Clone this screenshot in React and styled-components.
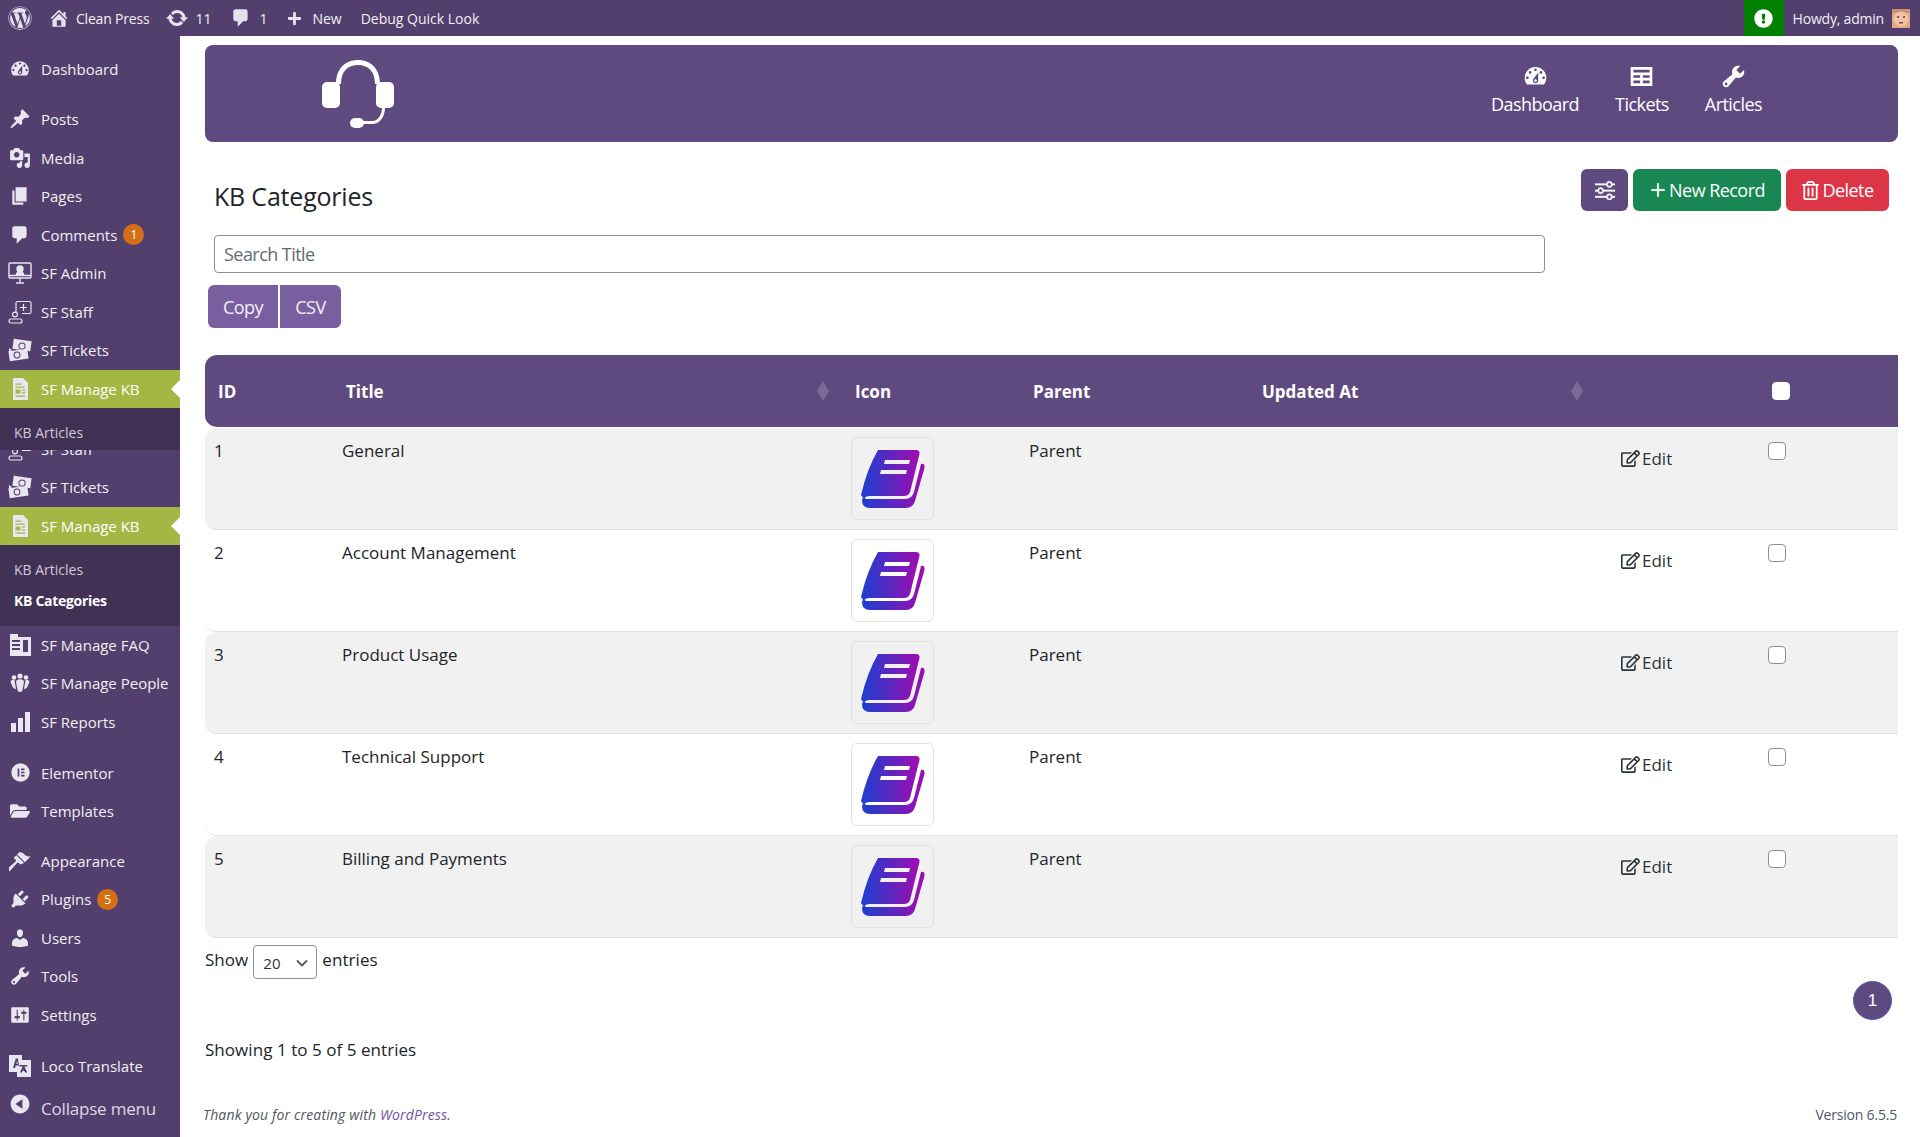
import React from "react";
import styled, { createGlobalStyle } from "styled-components";
import { FaWordpress, FaFolderOpen, FaExclamationCircle, FaPlus, FaRegEdit, FaRegTrashAlt } from "react-icons/fa";
import { BsSliders, BsPlusLg } from "react-icons/bs";

const FONT = `"Open Sans", "Noto Sans", "Liberation Sans", sans-serif`;

const Global = createGlobalStyle`
  html, body { margin: 0; padding: 0; height: 1137px; overflow: hidden; background: #fff; }
  body { font-family: ${FONT}; color: #212529; }
  * { box-sizing: border-box; }
`;

const P = {
  dashboard: "M3.76 16h12.48c1.1-1.37 1.76-3.11 1.76-5 0-4.42-3.58-8-8-8s-8 3.58-8 8c0 1.89.66 3.63 1.76 5zM10 4c.55 0 1 .45 1 1s-.45 1-1 1-1-.45-1-1 .45-1 1-1zM6 6c.55 0 1 .45 1 1s-.45 1-1 1-1-.45-1-1 .45-1 1-1zm8 0c.55 0 1 .45 1 1s-.45 1-1 1-1-.45-1-1 .45-1 1-1zm-5.37 5.55L12 7v6c0 1.1-.9 2-2 2s-2-.9-2-2c0-.57.24-1.08.63-1.45zM4 10c.55 0 1 .45 1 1s-.45 1-1 1-1-.45-1-1 .45-1 1-1zm12 0c.55 0 1 .45 1 1s-.45 1-1 1-1-.45-1-1 .45-1 1-1zm-5 3c0-.55-.45-1-1-1s-1 .45-1 1 .45 1 1 1 1-.45 1-1z",
  post: "M10.44 3.02l1.82-1.82 6.36 6.35-1.83 1.82c-1.05-.68-2.48-.57-3.41.36l-.75.75c-.92.93-1.04 2.35-.35 3.41l-1.83 1.82-2.41-2.41-2.8 2.79c-.42.42-3.38 2.71-3.8 2.29s1.86-3.39 2.28-3.81l2.79-2.79L4.1 9.36l1.83-1.82c1.05.69 2.48.57 3.4-.36l.75-.75c.93-.92 1.05-2.35.36-3.41z",
  media: "M13 11V4c0-.55-.45-1-1-1h-1.67L9 1H5L3.67 3H2c-.55 0-1 .45-1 1v7c0 .55.45 1 1 1h10c.55 0 1-.45 1-1zM7 4.5c1.38 0 2.5 1.12 2.5 2.5S8.38 9.5 7 9.5 4.5 8.38 4.5 7 5.62 4.5 7 4.5zM14 6h5v10.5c0 1.38-1.12 2.5-2.5 2.5S14 17.88 14 16.5s1.12-2.5 2.5-2.5c.17 0 .34.02.5.05V9h-3V6zm-4 8.05V13h2v3.5c0 1.38-1.12 2.5-2.5 2.5S7 17.88 7 16.5 8.12 14 9.5 14c.17 0 .34.02.5.05z",
  page: "M6 15V2h10v13H6zm-1 1h8v2H3V5h2v11z",
  comment: "M5 2h9c1.1 0 2 .9 2 2v7c0 1.1-.9 2-2 2h-2l-5 5v-5H5c-1.1 0-2-.9-2-2V4c0-1.1.9-2 2-2z",
  home: "M16 8.5l1.53 1.53-1.06 1.06L10 4.62l-6.47 6.47-1.06-1.06L10 2.5l4 4v-2h2v4zm-6-2.46l6 5.99V18H4v-5.97zM12 17v-5H8v5h4z",
  update: "M10.2 3.28c3.53 0 6.43 2.61 6.92 6h2.08l-3.5 4-3.5-4h2.32c-.45-1.97-2.21-3.45-4.32-3.45-1.45 0-2.73.71-3.54 1.78L4.95 5.66C6.23 4.2 8.11 3.28 10.2 3.28zm-.4 13.44c-3.52 0-6.43-2.61-6.92-6H.8l3.5-4c1.17 1.33 2.33 2.67 3.5 4H5.48c.45 1.97 2.21 3.45 4.32 3.45 1.45 0 2.73-.71 3.54-1.78l1.71 1.95c-1.28 1.46-3.15 2.38-5.25 2.38z",
  plugins: "M13.11 4.36L9.87 7.6 8 5.73l3.24-3.24c.35-.34 1.05-.2 1.56.32.52.51.66 1.21.31 1.55zm-8 1.77l.91-1.12 9.01 9.01-1.19.84c-.71.71-2.63 1.16-3.82 1.16H6.14L4.9 17.26c-.59.59-1.54.59-2.12 0-.59-.58-.59-1.53 0-2.12l1.24-1.24v-3.88c0-1.13.4-3.19 1.09-3.89zm7.26 3.97l3.24-3.24c.34-.35 1.04-.21 1.55.31.52.51.66 1.21.31 1.55l-3.24 3.25z",
  users: "M10 9.25c-2.27 0-2.73-3.44-2.73-3.44C7 4.02 7.82 2 9.97 2c2.16 0 2.98 2.02 2.71 3.81 0 0-.41 3.44-2.68 3.44zm0 2.57L12.72 10c2.39 0 4.52 2.33 4.52 4.53v2.49s-3.65 1.13-7.24 1.13c-3.65 0-7.24-1.13-7.24-1.13v-2.49c0-2.25 1.94-4.48 4.47-4.48z",
  tools: "M16.68 9.77c-1.34 1.34-3.3 1.67-4.95.99l-5.41 6.52c-.99.99-2.59.99-3.58 0s-.99-2.59 0-3.57l6.52-5.42c-.68-1.65-.35-3.61.99-4.95 1.28-1.28 3.12-1.62 4.72-1.06l-2.89 2.89 2.82 2.82 2.86-2.87c.53 1.58.18 3.39-1.08 4.65zM3.81 16.21c.4.39 1.04.39 1.43 0 .4-.4.4-1.04 0-1.43-.39-.4-1.03-.4-1.43 0-.39.39-.39 1.03 0 1.43z",
  settings: "M18 16V4c0-.55-.45-1-1-1H3c-.55 0-1 .45-1 1v12c0 .55.45 1 1 1h14c.55 0 1-.45 1-1zM8 11h1c.55 0 1 .45 1 1s-.45 1-1 1H8v1.5c0 .28-.22.5-.5.5s-.5-.22-.5-.5V13H6c-.55 0-1-.45-1-1s.45-1 1-1h1V5.5c0-.28.22-.5.5-.5s.5.22.5.5V11zm5-2h-1c-.55 0-1-.45-1-1s.45-1 1-1h1V5.5c0-.28.22-.5.5-.5s.5.22.5.5V7h1c.55 0 1 .45 1 1s-.45 1-1 1h-1v5.5c0 .28-.22.5-.5.5s-.5-.22-.5-.5V9z",
  collapse: "M10 2.16c4.33 0 7.84 3.51 7.84 7.84s-3.51 7.84-7.84 7.84S2.16 14.33 2.16 10 5.71 2.16 10 2.16zm2 11.72V6.12L6.18 9.97z",
  appearance: "M14.48 11.06L7.41 3.99l1.5-1.5c.5-.56 2.3-.47 3.51.32 1.21.8 1.43 1.28 2.91 2.1 1.18.64 2.45 1.26 4.45.85zm-.71.71L6.7 4.7 4.93 6.47c-.39.39-.39 1.02 0 1.41l1.06 1.06c.39.39.39 1.03 0 1.42-.6.6-6.4 5.67-7.03 6.3-.59.59-.59 1.54 0 2.12.59.59 1.53.59 2.12 0 .63-.63 5.7-6.43 6.3-7.03.39-.39 1.03-.39 1.42 0l1.06 1.06c.39.39 1.02.39 1.41 0z",
  elementor: "M10 2a8 8 0 1 0 0 16 8 8 0 0 0 0-16zM7.5 6.5H9v7H7.5zM10.5 6.5h3V8h-3zM10.5 9.25h3v1.5h-3zM10.5 12h3v1.5h-3z",
  table: "M18 17V3H2v14h16zM16 7H4V5h12v2zm-7 4H4V9h5v2zm7 0h-5V9h5v2zm-7 4H4v-2h5v2zm7 0h-5v-2h5v2z",
};

const Dash = ({ d, size = 20 }) => (
  <svg width={size} height={size} viewBox="0 0 20 20" fill="currentColor" fillRule="evenodd"><path d={d} /></svg>
);

const AdminIcon = () => (
  <svg width="24" height="24" viewBox="0 0 24 24" fill="none" stroke="currentColor" strokeWidth="1.4">
    <rect x="1" y="2" width="22" height="15" rx="1" />
    <path d="M8 22h8M12 17v5M1 14.5h22" />
    <circle cx="12" cy="8" r="3" fill="currentColor" />
    <path d="M8.5 14c0-2 1.5-3 3.5-3s3.5 1 3.5 3z" fill="currentColor" />
  </svg>
);
const StaffIcon = () => (
  <svg width="24" height="24" viewBox="0 0 24 24" fill="none" stroke="currentColor" strokeWidth="1.2">
    <path d="M8 12V3a1.5 1.5 0 0 1 1.5-1.5h12A1.5 1.5 0 0 1 23 3v9a1.5 1.5 0 0 1-1.5 1.5H14" />
    <path d="M15.5 4v7M12 7.5h7" />
    <circle cx="7" cy="14.5" r="2.4" />
    <rect x="1" y="19" width="13" height="4" rx="2" />
  </svg>
);
const TicketsIcon = () => (
  <svg width="24" height="24" viewBox="0 0 24 24" fill="currentColor">
    <rect x="5" y="2" width="18" height="10" transform="rotate(8 14 7)" />
    <rect x="1" y="12" width="19" height="10" transform="rotate(-8 10 17)" />
    <path d="M6 0l2 3-2 2zM1 10l3 2-3 2z" />
    <circle cx="14" cy="8" r="3.6" fill="#523f6d" />
    <circle cx="14" cy="8" r="2.6" />
    <circle cx="9" cy="17" r="3.4" fill="#523f6d" />
    <circle cx="9" cy="17" r="2.4" />
  </svg>
);
const KbIcon = () => (
  <svg width="24" height="24" viewBox="0 0 24 24" fill="currentColor" fillRule="evenodd">
    <path d="M5 1h10l5 5v17H5zM7.5 6.5v1.3h6V6.5zM7.5 9.5v1.3h9V9.5zM7.5 12.5v4h5v-4zM14 12.5v1.3h3v-1.3zM14 15.2v1.3h3v-1.3zM7.5 18.5v1.3h9.5v-1.3z" />
  </svg>
);
const FaqIcon = () => (
  <svg width="24" height="24" viewBox="0 0 24 24" fill="currentColor" fillRule="evenodd">
    <path d="M2 1h8v3h13v19H2zM4 7v2h8V7zM4 11v2h8v-2zM4 15v2h8v-2zM15 7v12h5V7z" />
  </svg>
);
const PeopleIcon = () => (
  <svg width="24" height="24" viewBox="0 0 24 24" fill="currentColor">
    <circle cx="12" cy="5" r="2.6" /><circle cx="6" cy="6.5" r="2.3" /><circle cx="18" cy="6.5" r="2.3" />
    <path d="M8 11c0-2 1.8-2.8 4-2.8S16 9 16 11l-1.5 8c-.3 1-1.2 2-2.5 2s-2.2-1-2.5-2z" />
    <path d="M2.5 11c0-1.5 1.5-2.5 4-2.2L7 12l1 6c-2 0-3-1-3.5-2.5zM21.5 11c0-1.5-1.5-2.5-4-2.2L17 12l-1 6c2 0 3-1 3.5-2.5z" />
  </svg>
);
const ReportsIcon = () => (
  <svg width="24" height="24" viewBox="0 0 24 24" fill="currentColor">
    <rect x="3" y="13" width="5" height="9" /><rect x="10" y="8" width="5" height="14" /><rect x="17" y="2" width="5" height="20" />
  </svg>
);
const LocoIcon = () => (
  <svg width="24" height="24" viewBox="0 0 24 24" fill="currentColor" fillRule="evenodd">
    <path d="M1 1h13v5h9v17H9v-5H1zM5 14h2l.8-2.5h2.6l.4 1.3V10L9.8 4.5h-2zM8.3 9.8h1.6L9.1 7zM11.5 11v1.4h3.2l-2.8 6h1.7l1.9-2.1 1.9 2.1h1.8l-2.8-6h2.8V11h-3.3z" />
  </svg>
);

const Root = styled.div`
  width: 1920px;
  height: 1137px;
  display: grid;
  grid-template-columns: 180px 1fr;
  grid-template-rows: 36px 1fr;
  overflow: hidden;
`;

const AdminBar = styled.header`
  grid-column: 1 / 3;
  background: #523f6d;
  display: flex;
  align-items: center;
  color: #f0f0f1;
  font-size: 14px;
`;
const BarItem = styled.span`
  display: inline-flex;
  align-items: center;
  margin-left: ${(p) => p.$ml}px;
  letter-spacing: ${(p) => p.$ls || 0}px;
  color: #f0f0f1;
  white-space: nowrap;
  & > svg { display: block; color: #e6e1ee; }
`;
const BarSpacer = styled.div`flex: 1;`;
const Notice = styled.span`
  width: 40px;
  height: 36px;
  background: #008000;
  display: flex;
  align-items: center;
  justify-content: center;
  color: #fff;
  font-size: 19px;
`;
const Avatar = styled.svg`
  width: 18px;
  height: 19px;
  margin: 0 10px 0 8px;
  display: block;
`;

const Side = styled.nav`
  background: #523f6d;
  padding-top: 14px;
  color: #f0f0f1;
  font-size: 15px;
  overflow: hidden;
`;
const Row = styled.div`
  position: relative;
  height: ${(p) => (p.$active ? 38 : 38.5)}px;
  margin-bottom: ${(p) => p.$after || 0}px;
  display: flex;
  align-items: center;
  padding-left: 8px;
  background: ${(p) => (p.$active ? "#a3b745" : "transparent")};
  color: ${(p) => (p.$active ? "#fff" : "#f0f0f1")};
  white-space: nowrap;
  ${(p) => p.$active && `
    &::after {
      content: "";
      position: absolute;
      right: 0;
      top: 50%;
      margin-top: -9px;
      border: 9px solid transparent;
      border-left-width: 0;
      border-right-color: #fff;
    }
  `}
`;
const RowIcon = styled.span`
  width: 24px;
  height: 24px;
  display: flex;
  align-items: center;
  justify-content: center;
  color: #e9e5f1;
  margin-right: 9px;
  flex: none;
  & svg { display: block; }
`;
const Clipped = styled.div`
  height: 18.5px;
  overflow: hidden;
  & > div { margin-top: -20px; }
`;
const Badge = styled.span`
  width: 21px;
  height: 21px;
  border-radius: 50%;
  background: #d46f15;
  color: #fff;
  font-size: 12px;
  display: flex;
  align-items: center;
  justify-content: center;
  margin-left: 6px;
`;
const SubMenu = styled.div`
  height: ${(p) => p.$h}px;
  background: #413255;
  padding-top: ${(p) => p.$pt}px;
  font-size: 14px;
  color: #cfc8da;
`;
const SubItem = styled.div`
  height: 31px;
  line-height: 31px;
  padding-left: 14px;
  font-weight: ${(p) => (p.$bold ? 700 : 400)};
  letter-spacing: ${(p) => (p.$bold ? "-0.3px" : "0")};
  color: ${(p) => (p.$bold ? "#fff" : "#cfc8da")};
`;
const CollapseRow = styled(Row)`
  font-size: 17px;
  letter-spacing: -0.2px;
  color: #dcd7e5;
  margin-top: 4px;
  & ${RowIcon} { margin-top: -8px; }
`;

const Main = styled.main`
  padding: 9px 22px 0 25px;
  display: flex;
  flex-direction: column;
  min-width: 0;
`;
const Banner = styled.section`
  height: 97px;
  background: #5f4a80;
  border-radius: 8px;
  display: flex;
  align-items: center;
  justify-content: space-between;
  padding: 0 136px 0 117px;
  color: #fff;
`;
const BannerNav = styled.div`
  display: flex;
  gap: 36px;
  padding-bottom: 8px;
`;
const NavItem = styled.a`
  display: flex;
  flex-direction: column;
  align-items: center;
  color: #fff;
  font-size: 18px;
  letter-spacing: -0.55px;
  line-height: 24px;
  & > svg { margin-bottom: 2px; display: block; }
`;
const TitleRow = styled.div`
  margin-top: 27px;
  height: 66px;
  display: flex;
  justify-content: space-between;
  align-items: flex-start;
  padding: 0 9px 0 9px;
`;
const Title = styled.h1`
  margin: 10px 0 0;
  font-size: 25px;
  line-height: 34px;
  font-weight: 400;
  letter-spacing: -0.2px;
  color: #212529;
`;
const Actions = styled.div`
  display: flex;
  gap: 5px;
`;
const Btn = styled.button`
  height: 42px;
  width: ${(p) => p.$w}px;
  border: 0;
  border-radius: 6px;
  background: ${(p) => p.$bg};
  color: #fff;
  font-family: ${FONT};
  font-size: 18px;
  letter-spacing: -0.55px;
  display: flex;
  align-items: center;
  justify-content: center;
  gap: 2px;
  padding: 0;
  & svg { stroke: currentColor; stroke-width: ${(p) => p.$sw || 0}; }
`;
const Search = styled.input`
  width: 1331px;
  height: 38px;
  margin-left: 9px;
  border: 1px solid #8c8f94;
  border-radius: 4px;
  padding: 0 9px;
  font-family: ${FONT};
  font-size: 18px;
  letter-spacing: -0.55px;
  color: #646970;
  background: #fff;
  &::placeholder { color: #646970; opacity: 1; }
`;
const ExportGroup = styled.div`
  margin: 12px 0 27px 3px;
  display: flex;
  gap: 2px;
`;
const ExportBtn = styled.button`
  height: 43px;
  width: ${(p) => p.$w}px;
  border: 0;
  border-radius: ${(p) => (p.$first ? "6px 0 0 6px" : "0 6px 6px 0")};
  background: #7a5fa0;
  color: #f3f0f7;
  font-family: ${FONT};
  font-size: 18px;
  letter-spacing: -0.5px;
  padding: 0;
`;

const Table = styled.table`
  width: 1693px;
  table-layout: fixed;
  border-collapse: separate;
  border-spacing: 0;
  font-size: 17px;
`;
const Th = styled.th`
  height: 73px;
  background: #5f4a80;
  background-clip: padding-box;
  color: #fff;
  font-weight: 700;
  font-size: 17px;
  text-align: left;
  padding: 0 13px;
  border-bottom: 1px solid #fff;
  &:first-child { border-radius: 12px 0 0 12px; }
`;
const ThInner = styled.div`
  display: flex;
  align-items: center;
  justify-content: space-between;
`;
const Sort = styled.i`
  width: 12px;
  height: 20px;
  background: #7a6a96;
  clip-path: polygon(50% 0, 100% 50%, 50% 100%, 0 50%);
  margin-right: ${(p) => p.$mr}px;
`;
const Td = styled.td`
  height: 102px;
  padding: 9px;
  vertical-align: top;
  line-height: 27px;
  color: #212529;
  border-bottom: 1px solid #e0e0e0;
  background: ${(p) => (p.$odd ? "#f1f1f1" : "#fff")};
  &:first-child { border-radius: 12px 0 0 12px; }
`;
const Thumb = styled.div`
  width: 83px;
  height: 83px;
  border: 1px solid #e2e2e2;
  border-radius: 6px;
  display: flex;
  align-items: center;
  justify-content: center;
`;
const EditLink = styled.a`
  display: inline-flex;
  align-items: center;
  gap: 2px;
  margin-top: 8px;
  color: #2c3338;
`;
const Check = styled.input.attrs({ type: "checkbox" })`
  appearance: none;
  display: block;
  width: 18px;
  height: 18px;
  margin: ${(p) => (p.$head ? "0" : "5px 0 0")};
  border: 1px solid ${(p) => (p.$head ? "#fff" : "#8c8f94")};
  border-radius: 4px;
  background: #fff;
`;

const Below = styled.div`
  display: flex;
  justify-content: space-between;
  align-items: flex-start;
  padding: 7px 6px 0 0;
  font-size: 17px;
  letter-spacing: 0.05px;
`;
const LeftCol = styled.div`
  display: flex;
  flex-direction: column;
`;
const ShowLine = styled.label`
  display: flex;
  align-items: flex-start;
  gap: 5px;
  line-height: 30px;
`;
const SelectBox = styled.div`
  width: 64px;
  height: 34px;
  border: 1px solid #8c8f94;
  border-radius: 4px;
  display: flex;
  align-items: center;
  justify-content: space-between;
  padding: 2px 8px 0 9px;
  font-size: 15px;
  letter-spacing: 0;
  color: #2c3338;
`;
const Showing = styled.div`
  margin-top: 59px;
  line-height: 24px;
`;
const PageBtn = styled.div`
  width: 39px;
  height: 39px;
  margin-top: 36px;
  border-radius: 50%;
  background: #5f4a80;
  border: 1px solid #5a50b8;
  color: #fff;
  font-family: "Liberation Sans", sans-serif;
  font-size: 17px;
  letter-spacing: 0;
  display: flex;
  align-items: center;
  justify-content: center;
`;
const Footer = styled.footer`
  display: flex;
  justify-content: space-between;
  font-size: 14px;
  color: #50575e;
  margin: 43px 1px 0 -2px;
`;
const FootNote = styled.em`
  font-style: italic;
  letter-spacing: 0.15px;
  & a { color: #7353a5; }
`;
const Version = styled.span`
  letter-spacing: -0.2px;
`;

const Headset = () => (
  <svg width="72" height="70" viewBox="0 0 72 70" fill="#fff">
    <path d="M14 25C14 9 24 1 36 1s22 8 22 24h-5C53 12 46 6 36 6S19 12 19 25z" />
    <rect x="0" y="23" width="18" height="26" rx="5" />
    <rect x="54" y="23" width="18" height="26" rx="5" />
    <path d="M60 48h3c0 11-6 17-13 17H36v-3h14c6 0 10-6 10-14z" />
    <rect x="28" y="59" width="14" height="10" rx="5" />
  </svg>
);

const Book = () => (
  <svg width="64" height="60" viewBox="0 0 64 60" aria-hidden="true">
    <defs>
      <linearGradient id="bookGrad" x1="0" x2="1" y1="0" y2="0">
        <stop offset="0" stopColor="#1a40d0" />
        <stop offset="1" stopColor="#a00cb0" />
      </linearGradient>
    </defs>
    <path
      fill="url(#bookGrad)"
      fillRule="evenodd"
      d="M17 1H55Q59 1 58.5 5L49 43Q47.5 47 43 47H9Q4 47 3 50L0 46Q6 20 17 1ZM24 11L23 15H48L49 11ZM20 21L19 25H45L46 21Z"
    />
    <path
      fill="url(#bookGrad)"
      d="M5 50H44Q51 50 53 43L60 15Q64 14 63.5 19L54 52Q52 59 45 59H9Q1 59 1 51Q2 47 5 50Z"
    />
  </svg>
);

const categories = [
  [1, "General"],
  [2, "Account Management"],
  [3, "Product Usage"],
  [4, "Technical Support"],
  [5, "Billing and Payments"],
];

const NavRow = ({ icon, children, active, after, badge }) => (
  <Row $active={active} $after={after}>
    <RowIcon>{icon}</RowIcon>
    {children}
    {badge && <Badge>{badge}</Badge>}
  </Row>
);

export default function App() {
  return (
    <Root>
      <Global />
      <AdminBar>
        <BarItem $ml={8}><FaWordpress size={24} /></BarItem>
        <BarItem $ml={16}><Dash d={P.home} size={22} /></BarItem>
        <BarItem $ml={6} $ls={-0.2}>Clean Press</BarItem>
        <BarItem $ml={16}><Dash d={P.update} size={24} /></BarItem>
        <BarItem $ml={6}>11</BarItem>
        <BarItem $ml={19}><Dash d={P.comment} size={22} /></BarItem>
        <BarItem $ml={7}>1</BarItem>
        <BarItem $ml={20}><FaPlus size={15} /></BarItem>
        <BarItem $ml={10}>New</BarItem>
        <BarItem $ml={19}>Debug Quick Look</BarItem>
        <BarSpacer />
        <Notice><FaExclamationCircle /></Notice>
        <BarItem $ml={9} $ls={-0.2}>Howdy, admin</BarItem>
        <Avatar viewBox="0 0 18 19">
          <rect width="18" height="19" fill="#e0a98a" />
          <rect width="18" height="4" fill="#c98f6e" />
          <circle cx="9" cy="10" r="7.5" fill="#f0c4a4" />
          <circle cx="6" cy="8" r="1" fill="#6b4a3a" />
          <circle cx="12" cy="8" r="1" fill="#6b4a3a" />
          <rect x="7" y="13" width="4" height="1.5" fill="#a04040" />
        </Avatar>
      </AdminBar>

      <Side>
        <NavRow after={11.5} icon={<Dash d={P.dashboard} size={22} />}>Dashboard</NavRow>
        <NavRow icon={<Dash d={P.post} size={22} />}>Posts</NavRow>
        <NavRow icon={<Dash d={P.media} size={22} />}>Media</NavRow>
        <NavRow icon={<Dash d={P.page} size={22} />}>Pages</NavRow>
        <NavRow badge="1" icon={<Dash d={P.comment} size={22} />}>Comments</NavRow>
        <NavRow icon={<AdminIcon />}>SF Admin</NavRow>
        <NavRow icon={<StaffIcon />}>SF Staff</NavRow>
        <NavRow icon={<TicketsIcon />}>SF Tickets</NavRow>
        <NavRow active icon={<KbIcon />}>SF Manage KB</NavRow>
        <SubMenu $h={42} $pt={9}>
          <SubItem>KB Articles</SubItem>
        </SubMenu>
        <Clipped>
          <NavRow icon={<StaffIcon />}>SF Staff</NavRow>
        </Clipped>
        <NavRow icon={<TicketsIcon />}>SF Tickets</NavRow>
        <NavRow active icon={<KbIcon />}>SF Manage KB</NavRow>
        <SubMenu $h={81} $pt={9}>
          <SubItem>KB Articles</SubItem>
          <SubItem $bold>KB Categories</SubItem>
        </SubMenu>
        <NavRow icon={<FaqIcon />}>SF Manage FAQ</NavRow>
        <NavRow icon={<PeopleIcon />}>SF Manage People</NavRow>
        <NavRow after={12.5} icon={<ReportsIcon />}>SF Reports</NavRow>
        <NavRow icon={<Dash d={P.elementor} size={23} />}>Elementor</NavRow>
        <NavRow after={11} icon={<FaFolderOpen size={20} />}>Templates</NavRow>
        <NavRow icon={<Dash d={P.appearance} size={22} />}>Appearance</NavRow>
        <NavRow badge="5" icon={<Dash d={P.plugins} size={22} />}>Plugins</NavRow>
        <NavRow icon={<Dash d={P.users} size={22} />}>Users</NavRow>
        <NavRow icon={<Dash d={P.tools} size={22} />}>Tools</NavRow>
        <NavRow after={12.5} icon={<Dash d={P.settings} size={22} />}>Settings</NavRow>
        <NavRow icon={<LocoIcon />}>Loco Translate</NavRow>
        <CollapseRow><RowIcon><Dash d={P.collapse} size={24} /></RowIcon>Collapse menu</CollapseRow>
      </Side>

      <Main>
        <Banner>
          <Headset />
          <BannerNav>
            <NavItem><Dash d={P.dashboard} size={27} />Dashboard</NavItem>
            <NavItem><Dash d={P.table} size={27} />Tickets</NavItem>
            <NavItem><Dash d={P.tools} size={27} />Articles</NavItem>
          </BannerNav>
        </Banner>

        <TitleRow>
          <Title>KB Categories</Title>
          <Actions>
            <Btn $w={47} $bg="#5f4a80" $sw={0.5}><BsSliders size={20} /></Btn>
            <Btn $w={148} $bg="#198754" $sw={0.7}><BsPlusLg size={18} />New Record</Btn>
            <Btn $w={103} $bg="#dc3545"><FaRegTrashAlt size={19} />Delete</Btn>
          </Actions>
        </TitleRow>

        <Search placeholder="Search Title" readOnly />
        <ExportGroup>
          <ExportBtn $first $w={70}>Copy</ExportBtn>
          <ExportBtn $w={61}>CSV</ExportBtn>
        </ExportGroup>

        <Table>
          <colgroup>
            <col width="128" /><col width="509" /><col width="178" /><col width="229" /><col width="363" /><col width="147" /><col width="139" />
          </colgroup>
          <thead>
            <tr>
              <Th>ID</Th>
              <Th><ThInner>Title<Sort $mr={0} /></ThInner></Th>
              <Th>Icon</Th>
              <Th>Parent</Th>
              <Th><ThInner>Updated At<Sort $mr={16} /></ThInner></Th>
              <Th />
              <Th><Check $head readOnly /></Th>
            </tr>
          </thead>
          <tbody>
            {categories.map(([id, name], i) => {
              const odd = i % 2 === 0;
              return (
                <tr key={id}>
                  <Td $odd={odd}>{id}</Td>
                  <Td $odd={odd}>{name}</Td>
                  <Td $odd={odd}><Thumb><Book /></Thumb></Td>
                  <Td $odd={odd}>Parent</Td>
                  <Td $odd={odd} />
                  <Td $odd={odd}><EditLink><FaRegEdit size={19} />Edit</EditLink></Td>
                  <Td $odd={odd}><Check readOnly /></Td>
                </tr>
              );
            })}
          </tbody>
        </Table>

        <Below>
          <LeftCol>
            <ShowLine>
              Show
              <SelectBox>20
                <svg width="12" height="8" viewBox="0 0 12 8" fill="none" stroke="#50575e" strokeWidth="1.8"><path d="M1 1.5l5 5 5-5" /></svg>
              </SelectBox>
              entries
            </ShowLine>
            <Showing>Showing 1 to 5 of 5 entries</Showing>
          </LeftCol>
          <PageBtn>1</PageBtn>
        </Below>

        <Footer>
          <FootNote>Thank you for creating with <a>WordPress</a>.</FootNote>
          <Version>Version 6.5.5</Version>
        </Footer>
      </Main>
    </Root>
  );
}
